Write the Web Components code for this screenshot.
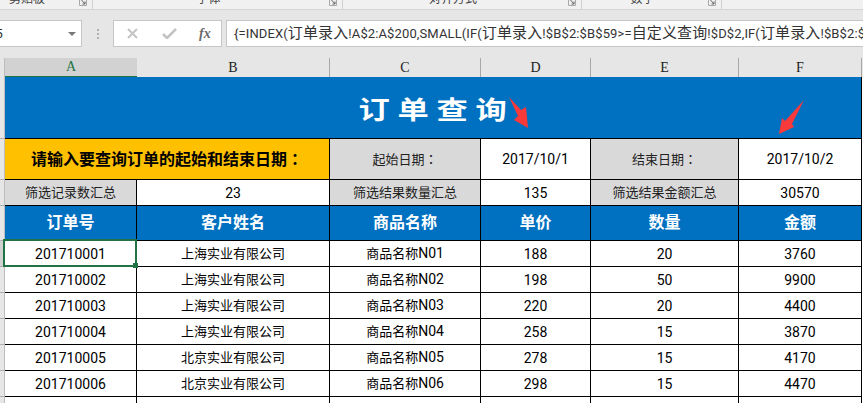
<!DOCTYPE html>
<html lang="zh">
<head>
<meta charset="utf-8">
<title>订单查询</title>
<style>
  html, body { margin: 0; padding: 0; background: #fff; }
  body { font-family: Roboto, "Noto Sans CJK SC", sans-serif; }
</style>
</head>
<body>
<excel-app>
  <excel-ribbon slot="ribbon">
    <ribbon-group style="--w:93px;--pr:38px">剪贴板</ribbon-group>
    <ribbon-group style="--w:250px;--pr:18px">字体</ribbon-group>
    <ribbon-group style="--w:239px;--pr:18px">对齐方式</ribbon-group>
    <ribbon-group style="--w:140px;--pr:18px">数字</ribbon-group>
  </excel-ribbon>
  <formula-bar slot="formula" name="A5">{=INDEX(<b>订单录入</b>!A$2:A$200,SMALL(IF(<b>订单录入</b>!$B$2:$B$59&gt;=<b>自定义查询</b>!$D$2,IF(<b>订单录入</b>!$B$2:$B$59</formula-bar>
  <order-sheet slot="sheet"></order-sheet>
</excel-app>

<script>
class ExcelApp extends HTMLElement {
  constructor () {
    super();
    this.attachShadow({ mode: 'open' });
    this.shadowRoot.innerHTML = `
      <style>
      :host {
        display: flex;
        flex-direction: column;
        width: 863px;
        height: 403px;
        overflow: hidden;
        background: #e6e6e6;
      }
      </style>
      <slot name="ribbon"></slot>
      <slot name="formula"></slot>
      <slot name="sheet"></slot>`;
  }
}

class ExcelRibbon extends HTMLElement {
  constructor () {
    super();
    this.attachShadow({ mode: 'open' });
    this.shadowRoot.innerHTML = `
      <style>
      :host {
        display: flex;
        flex: none;
        height: 10px;
        box-sizing: border-box;
        overflow: hidden;
        background: #f1f1f1;
        border-bottom: 1px solid #d4d4d4;
      }
      </style>
      <slot></slot>`;
  }
}

class RibbonGroup extends HTMLElement {
  constructor () {
    super();
    this.attachShadow({ mode: 'open' });
    this.shadowRoot.innerHTML = `
      <style>
      :host {
        display: flex;
        flex: none;
        position: relative;
        box-sizing: border-box;
        width: var(--w);
        height: 9px;
        padding-right: var(--pr);
        justify-content: center;
        align-items: flex-end;
        border-right: 1px solid #d0d0d0;
        color: #444;
        font: 12px/16px "Noto Sans CJK SC", sans-serif;
      }
      .text { display: block; margin-bottom: 3px; }
      svg { position: absolute; right: 5px; top: 0; }
      </style>
      <span class="text"><slot></slot></span>
      <svg width="8" height="6" viewBox="0 0 8 6">
        <path d="M0.5 0V5.5H7.5V0" fill="none" stroke="#a8a8a8"/>
        <path d="M2.5 0L6 4M6 1.5V4H3.5" fill="none" stroke="#666"/>
      </svg>`;
  }
}

class FormulaBar extends HTMLElement {
  constructor () {
    super();
    this.attachShadow({ mode: 'open' });
    this.shadowRoot.innerHTML = `
      <style>
      :host {
        display: flex;
        flex: none;
        height: 48px;
        box-sizing: border-box;
        padding: 10px 0 11px;
        background: #e6e6e6;
        font: 13px/25px Roboto, "Noto Sans CJK SC", sans-serif;
        color: #333;
      }
      .box {
        box-sizing: border-box;
        height: 27px;
        background: #fff;
        border: 1px solid #c6c6c6;
        overflow: hidden;
        white-space: nowrap;
      }
      .name {
        flex: none;
        display: flex;
        align-items: center;
        justify-content: space-between;
        width: 82px;
        border-left: 0;
      }
      .name span { margin-left: -13px; }
      .name i {
        width: 0;
        height: 0;
        margin-right: 5px;
        border: 4px solid transparent;
        border-top: 4px solid #777;
        border-bottom: 0;
      }
      .dots {
        flex: none;
        display: flex;
        flex-direction: column;
        gap: 2px;
        align-self: center;
        width: 2px;
        margin: 0 14px 0 15px;
      }
      .dots i { width: 2px; height: 2px; background: #b0b0b0; }
      .tools {
        flex: none;
        display: flex;
        align-items: center;
        width: 109px;
        padding-left: 13px;
      }
      .tools svg { flex: none; }
      .tools .fx {
        margin-left: 22px;
        color: #6a6a6a;
        font: italic 700 14px/25px "Liberation Serif", serif;
      }
      .formula {
        flex: 1;
        min-width: 0;
        margin-left: 4px;
        padding-left: 7px;
        border-right: 0;
        letter-spacing: .12px;
      }
      ::slotted(b) { font-weight: 400; font-size: 15px; }
      </style>
      <div class="box name"><span>${this.getAttribute('name') ?? ''}</span><i></i></div>
      <div class="dots"><i></i><i></i><i></i></div>
      <div class="box tools">
        <svg width="11" height="11" viewBox="0 0 11 11"><path d="M1 1L10 10M10 1L1 10" stroke="#c4c4c4" stroke-width="2" fill="none"/></svg>
        <svg width="15" height="11" viewBox="0 0 15 11" style="margin-left:24px"><path d="M1 6L5 10L14 1" stroke="#c4c4c4" stroke-width="2.6" fill="none"/></svg>
        <span class="fx">fx</span>
      </div>
      <div class="box formula"><slot></slot></div>`;
  }
}

const SHEET_COLUMNS = '5px 132px 193px 151px 110px 148px 123px 1px';

class ColumnStrip extends HTMLElement {
  constructor () {
    super();
    this.attachShadow({ mode: 'open' });
    const letters = ['A', 'B', 'C', 'D', 'E', 'F'];
    this.shadowRoot.innerHTML = `
      <style>
      :host {
        display: grid;
        grid-template-columns: ${SHEET_COLUMNS};
        height: 19px;
        background: #e6e6e6;
      }
      div {
        box-sizing: border-box;
        display: flex;
        justify-content: center;
        align-items: center;
        color: #222;
        font: 14px/18px "Liberation Serif", serif;
        border-right: 1px solid #a8a8a8;
        border-bottom: 1px solid #b4b4b4;
      }
      .on {
        background: #d2d2d2;
        color: #217346;
        border-right: 0;
        border-bottom: 2px solid #217346;
      }
      .corner { border-right: 1px solid #bdbdbd; }
      </style>
      <div class="corner"></div>
      ${letters.map((l, i) => `<div class="${i === 0 ? 'on' : ''}">${l}</div>`).join('')}`;
  }
}

class SheetRow extends HTMLElement {
  constructor () {
    super();
    this.attachShadow({ mode: 'open' });
    this.shadowRoot.innerHTML = `
      <style>
      :host {
        display: grid;
        grid-template-columns: ${SHEET_COLUMNS};
        height: var(--h, 26px);
        background: #fff;
      }
      .head {
        box-sizing: border-box;
        background: #e6e6e6;
        border-right: 1px solid #bdbdbd;
        border-bottom: 1px solid #b0b0b0;
      }
      :host([current]) .head { background: #d2d2d2; }
      </style>
      <div class="head"></div>
      <slot></slot>`;
  }
}

class SheetCell extends HTMLElement {
  constructor () {
    super();
    this.attachShadow({ mode: 'open' });
    this.shadowRoot.innerHTML = `
      <style>
      :host {
        display: flex;
        position: relative;
        box-sizing: border-box;
        min-width: 0;
        justify-content: center;
        align-items: center;
        border-right: 1px solid #000;
        border-bottom: 1px solid #000;
        color: #000;
        white-space: nowrap;
        font: 13px/18px Roboto, "Noto Sans CJK SC", sans-serif;
      }
      :host([kind="num"]) { font-size: 14px; }
      :host([kind="label"]) { background: #d9d9d9; color: #222; }
      :host([kind="prompt"]) { background: #ffc000; font-size: 16px; font-weight: 700; }
      :host([kind="head"]) { background: #0070c0; color: #fff; font-size: 16px; font-weight: 700; }
      :host([kind="title"]) {
        padding-top: 7px;
        background: #0070c0;
        color: #fff;
        font-size: 25px;
        font-weight: 700;
        letter-spacing: 6.2px;
      }
      :host([kind="title"]) span { display: block; transform: scaleX(1.25); margin-left: 6px; }
      ::slotted(span) { font-size: 14px; }
      ::slotted(i) { font-style: normal; font-family: "Noto Sans CJK TC", sans-serif; }
      :host([selected])::after {
        content: '';
        position: absolute;
        left: -2px;
        top: -2px;
        right: -1px;
        bottom: -1px;
        border: 2px solid #217346;
        z-index: 2;
      }
      :host([selected])::before {
        content: '';
        position: absolute;
        right: -2px;
        bottom: -2px;
        width: 5px;
        height: 5px;
        background: #217346;
        z-index: 3;
      }
      </style>
      <span><slot></slot></span>`;
  }
}

const ORDERS = [
  ['201710001', '上海实业有限公司', 'N01', '188', '20', '3760'],
  ['201710002', '上海实业有限公司', 'N02', '198', '50', '9900'],
  ['201710003', '上海实业有限公司', 'N03', '220', '20', '4400'],
  ['201710004', '上海实业有限公司', 'N04', '258', '15', '3870'],
  ['201710005', '北京实业有限公司', 'N05', '278', '15', '4170'],
  ['201710006', '北京实业有限公司', 'N06', '298', '15', '4470']
];

class OrderSheet extends HTMLElement {
  constructor () {
    super();
    this.attachShadow({ mode: 'open' });
    const dataRows = ORDERS.map((o, i) => `
      <sheet-row ${i === 0 ? 'current' : ''}>
        <sheet-cell kind="num" ${i === 0 ? 'selected' : ''}>${o[0]}</sheet-cell>
        <sheet-cell>${o[1]}</sheet-cell>
        <sheet-cell>商品名称<span>${o[2]}</span></sheet-cell>
        <sheet-cell kind="num">${o[3]}</sheet-cell>
        <sheet-cell kind="num">${o[4]}</sheet-cell>
        <sheet-cell kind="num">${o[5]}</sheet-cell>
      </sheet-row>`).join('');
    this.shadowRoot.innerHTML = `
      <style>
      :host {
        display: block;
        flex: 1;
        min-height: 0;
        position: relative;
        background: #fff;
      }
      svg { position: absolute; left: 0; top: 0; pointer-events: none; z-index: 4; }
      </style>
      <column-strip></column-strip>
      <sheet-row style="--h:62px">
        <sheet-cell kind="title" style="grid-column: span 6">订单查询</sheet-cell>
      </sheet-row>
      <sheet-row style="--h:41px">
        <sheet-cell kind="prompt" style="grid-column: span 2">请输入要查询订单的起始和结束日期<i lang="zh-Hant">：</i></sheet-cell>
        <sheet-cell kind="label">起始日期<i lang="zh-Hant">：</i></sheet-cell>
        <sheet-cell kind="num">2017/10/1</sheet-cell>
        <sheet-cell kind="label">结束日期<i lang="zh-Hant">：</i></sheet-cell>
        <sheet-cell kind="num">2017/10/2</sheet-cell>
      </sheet-row>
      <sheet-row>
        <sheet-cell kind="label">筛选记录数汇总</sheet-cell>
        <sheet-cell kind="num">23</sheet-cell>
        <sheet-cell kind="label">筛选结果数量汇总</sheet-cell>
        <sheet-cell kind="num">135</sheet-cell>
        <sheet-cell kind="label">筛选结果金额汇总</sheet-cell>
        <sheet-cell kind="num">30570</sheet-cell>
      </sheet-row>
      <sheet-row style="--h:35px">
        <sheet-cell kind="head">订单号</sheet-cell>
        <sheet-cell kind="head">客户姓名</sheet-cell>
        <sheet-cell kind="head">商品名称</sheet-cell>
        <sheet-cell kind="head">单价</sheet-cell>
        <sheet-cell kind="head">数量</sheet-cell>
        <sheet-cell kind="head">金额</sheet-cell>
      </sheet-row>
      ${dataRows}
      <sheet-row>
        <sheet-cell></sheet-cell><sheet-cell></sheet-cell><sheet-cell></sheet-cell>
        <sheet-cell></sheet-cell><sheet-cell></sheet-cell><sheet-cell></sheet-cell>
      </sheet-row>
      <svg width="863" height="345" viewBox="0 58 863 345">
        <path d="M509 97L521 110L526 107L528 128L514 120L518 116Z" fill="#f93a3a"/>
        <path d="M804 100L792 124L794 127L779 134L782 118L785 121Z" fill="#f93a3a"/>
      </svg>`;
  }
}

customElements.define('excel-app', ExcelApp);
customElements.define('excel-ribbon', ExcelRibbon);
customElements.define('ribbon-group', RibbonGroup);
customElements.define('formula-bar', FormulaBar);
customElements.define('column-strip', ColumnStrip);
customElements.define('sheet-row', SheetRow);
customElements.define('sheet-cell', SheetCell);
customElements.define('order-sheet', OrderSheet);
</script>
</body>
</html>
